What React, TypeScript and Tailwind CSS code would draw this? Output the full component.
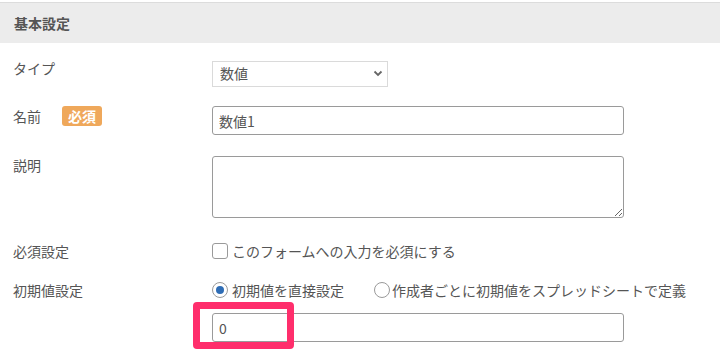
import { useState } from "react";

const labelCls = "w-[199px] shrink-0 text-[14px] text-[#555]";

function App() {
    const [name, setName] = useState("数値1");
    const [initial, setInitial] = useState("0");
    const [mode, setMode] = useState<"direct" | "sheet">("direct");
    const [required, setRequired] = useState(false);

    return (
        <div className="w-[720px] h-[357px] overflow-hidden bg-white font-['Noto_Sans_CJK_JP','Noto_Sans',sans-serif]">
            <div className="mt-[2px] border-t border-[#dcdcdc] bg-[#ececec] h-[41px] flex items-center pl-[14px]">
                <h2 className="text-[14px] font-bold text-[#555]">基本設定</h2>
            </div>

            <div className="pl-[13px]">
                {/* タイプ */}
                <div className="flex mt-[17px]">
                    <div className={labelCls + " leading-[16px]"}>タイプ</div>
                    <div className="relative w-[176px] h-[26px]">
                        <select className="appearance-none w-full h-full border border-[#dadada] bg-white pl-[7px] text-[14px] text-[#555] outline-none">
                            <option>数値</option>
                        </select>
                        <svg
                            className="absolute right-[5px] top-[10px] pointer-events-none"
                            width="10"
                            height="7"
                            viewBox="0 0 10 7"
                            fill="none"
                        >
                            <path d="M1.5 1.5l3.5 3.5 3.5-3.5" stroke="#666" strokeWidth="1.8" />
                        </svg>
                    </div>
                </div>

                {/* 名前 */}
                <div className="flex mt-[20px]">
                    <div className={labelCls + " flex items-center h-[20px] gap-[21px]"}>
                        <span>名前</span>
                        <span className="bg-[#efa85b] text-white font-bold text-[14px] leading-[20px] px-[6px] rounded-[3px]">
                            必須
                        </span>
                    </div>
                    <input
                        value={name}
                        onChange={(e) => setName(e.target.value)}
                        className="w-[412px] h-[29px] border border-[#9a9a9a] rounded-[3px] pl-[6px] text-[14px] text-[#555] outline-none"
                    />
                </div>

                {/* 説明 */}
                <div className="flex mt-[21px]">
                    <div className={labelCls + " leading-[18px]"}>説明</div>
                    <textarea className="w-[412px] h-[62px] border border-[#9a9a9a] rounded-[3px] p-[6px] text-[14px] text-[#555] outline-none" />
                </div>

                {/* 必須設定 */}
                <div className="flex items-center mt-[23px] h-[20px]">
                    <div className={labelCls}>必須設定</div>
                    <label
                        className="flex items-center gap-[4px] text-[14px] text-[#555] cursor-pointer"
                        onClick={() => setRequired(!required)}
                    >
                        <span className="w-[16px] h-[16px] border border-[#9a9a9a] rounded-[3px] bg-white flex items-center justify-center">
                            {required && <span className="w-[8px] h-[8px] bg-[#2f6db5]" />}
                        </span>
                        <span>このフォームへの入力を必須にする</span>
                    </label>
                </div>

                {/* 初期値設定 */}
                <div className="flex items-center mt-[19px] h-[20px]">
                    <div className={labelCls}>初期値設定</div>
                    <div className="flex items-center gap-[30px] text-[14px] text-[#555]">
                        <label className="flex items-center gap-[4px] cursor-pointer" onClick={() => setMode("direct")}>
                            <span className="w-[16px] h-[16px] rounded-full border border-[#9a9a9a] bg-white flex items-center justify-center">
                                {mode === "direct" && <span className="w-[8px] h-[8px] rounded-full bg-[#2f6db5]" />}
                            </span>
                            <span>初期値を直接設定</span>
                        </label>
                        <label className="flex items-center gap-[2px] cursor-pointer" onClick={() => setMode("sheet")}>
                            <span className="w-[16px] h-[16px] rounded-full border border-[#9a9a9a] bg-white flex items-center justify-center">
                                {mode === "sheet" && <span className="w-[8px] h-[8px] rounded-full bg-[#2f6db5]" />}
                            </span>
                            <span>作成者ごとに初期値をスプレッドシートで定義</span>
                        </label>
                    </div>
                </div>

                {/* 初期値 */}
                <div className="flex mt-[13px]">
                    <div className="w-[199px] shrink-0" />
                    <div className="relative">
                        <input
                            value={initial}
                            onChange={(e) => setInitial(e.target.value)}
                            className="w-[412px] h-[29px] border border-[#9a9a9a] rounded-[3px] pl-[6px] text-[14px] text-[#555] outline-none"
                        />
                        <div className="absolute left-[-19px] top-[-11px] w-[101px] h-[47px] border-[7px] border-[#ff2e6c] rounded-[4px] pointer-events-none" />
                    </div>
                </div>
            </div>
        </div>
    );
}

export default App;
